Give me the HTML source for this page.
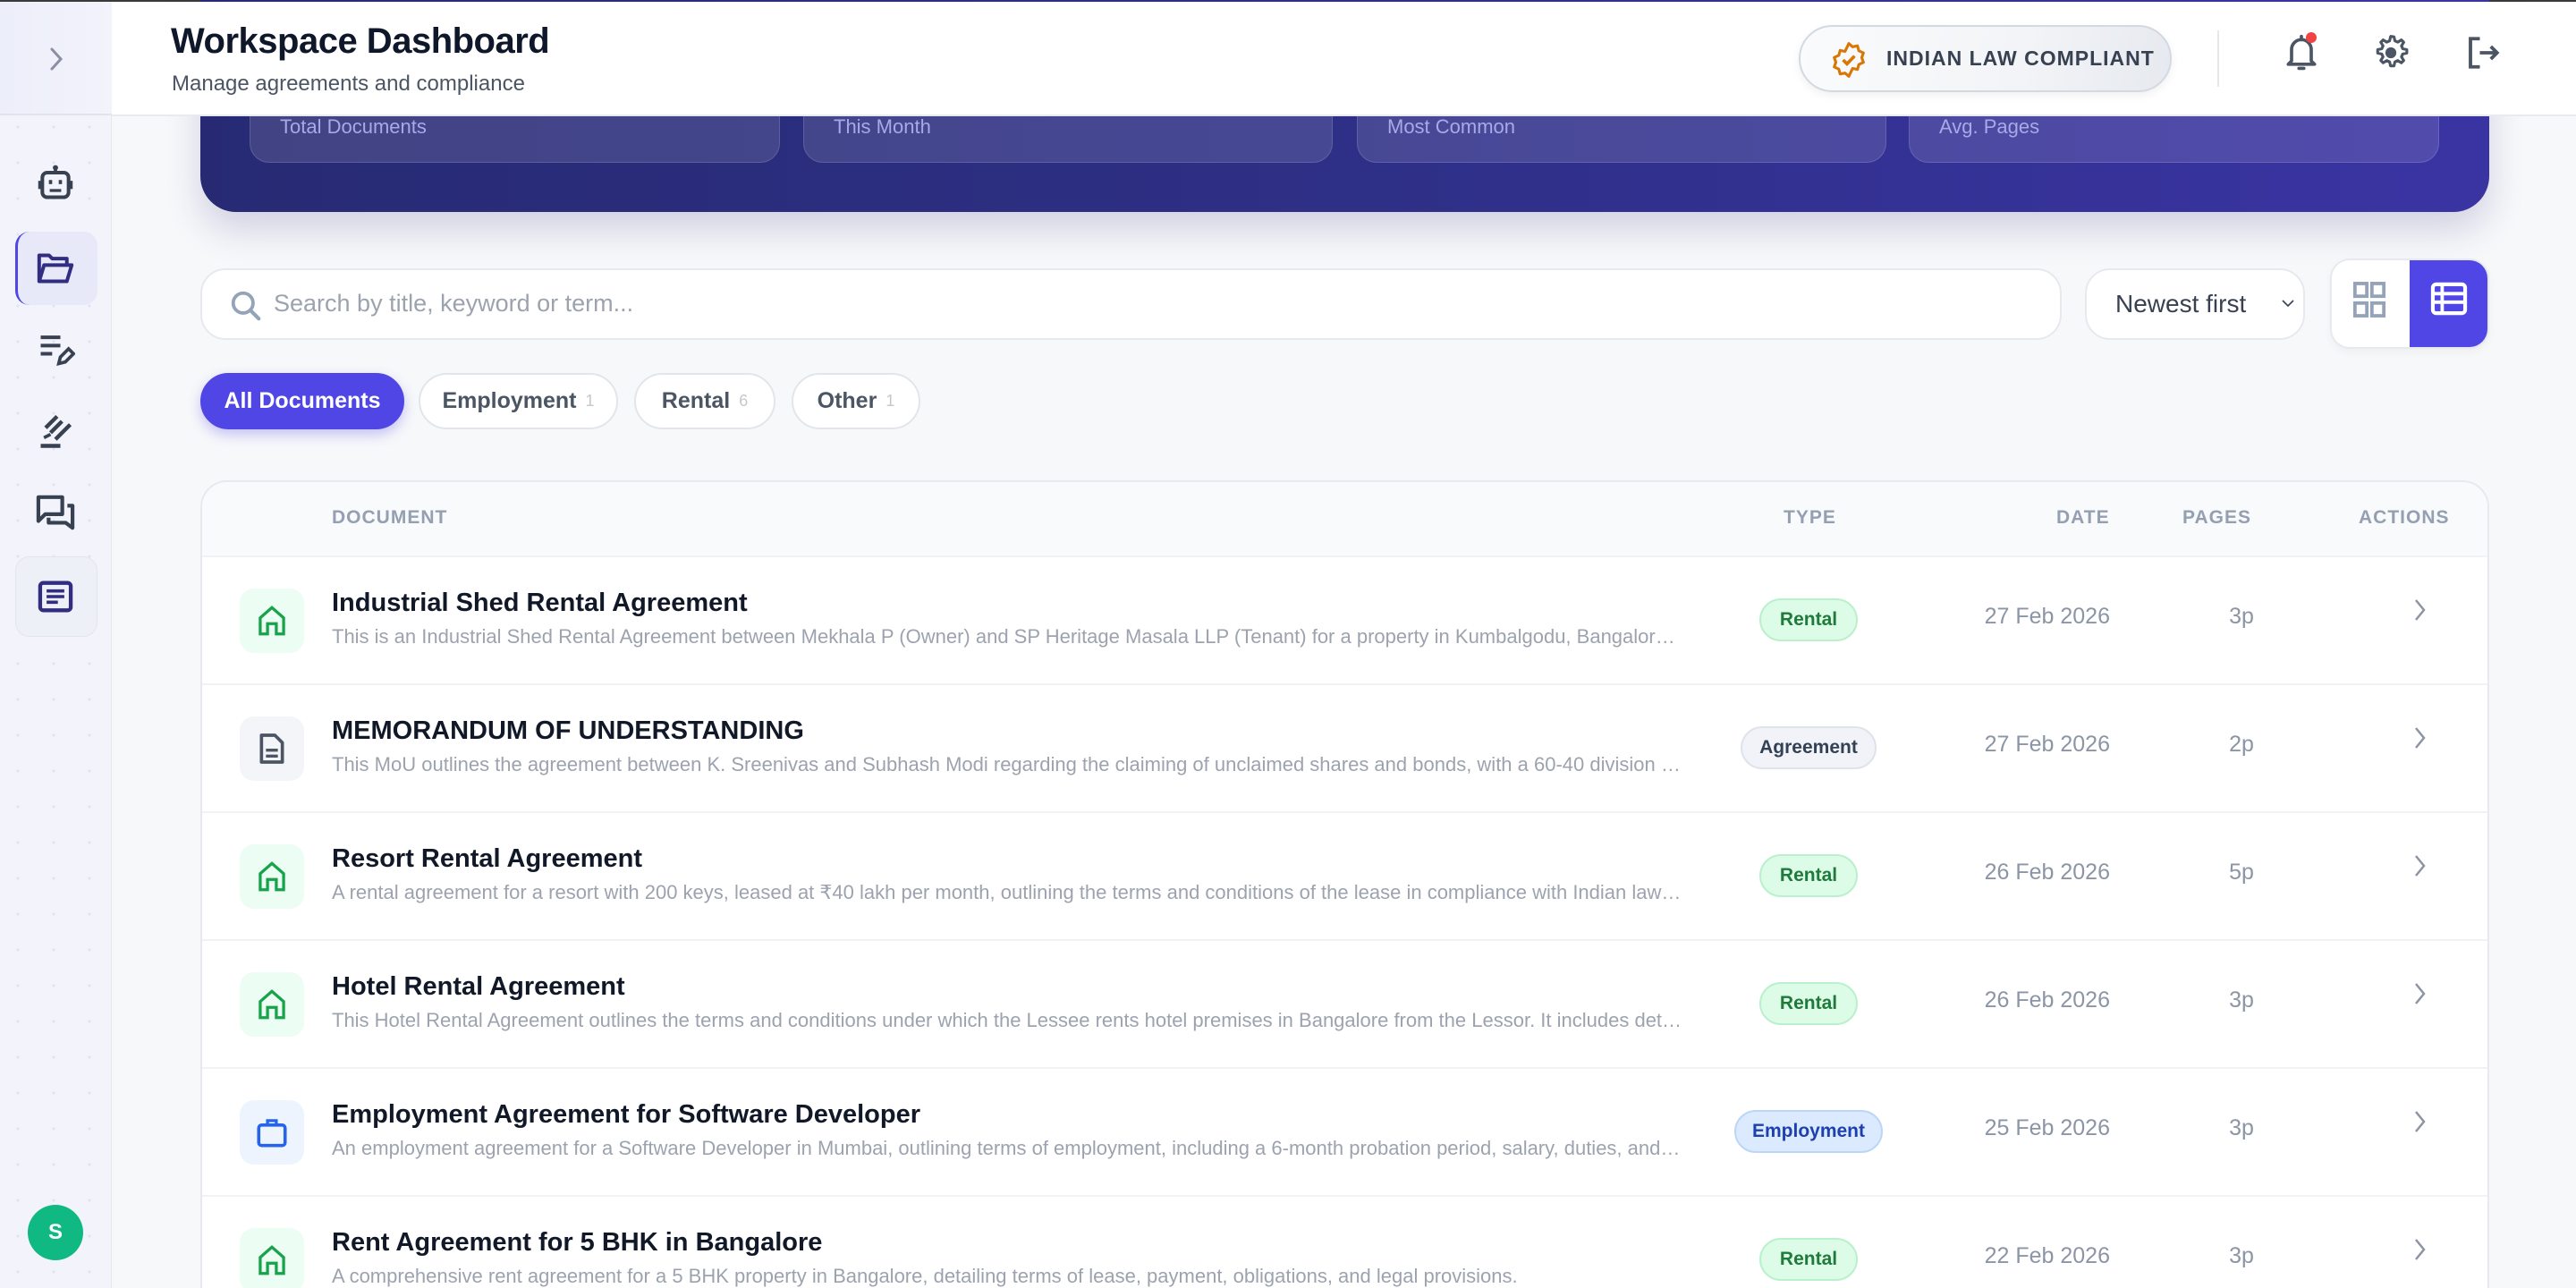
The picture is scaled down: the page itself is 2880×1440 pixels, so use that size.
<!DOCTYPE html>
<html style="width:2880px;height:1440px;overflow:hidden"><head><meta charset="utf-8">
<style>
*{box-sizing:border-box;margin:0;padding:0}
html,body{width:2880px;height:1440px;overflow:hidden}
body{background:#f7f8fa;font-family:"Liberation Sans",sans-serif;position:relative;border-top:2px solid #3a3a3a}
.abs{position:absolute}
#side{left:0;top:0;width:125px;height:1440px;background-color:#f3f4fb;background-image:radial-gradient(#e2e4ef 1.5px,transparent 1.6px);background-size:40px 40px;border-right:1px solid #e5e7eb}
#sidetop{left:0;top:0;width:125px;height:127px;border-bottom:2px solid #e2e4ea;background:linear-gradient(90deg,#eceefa,#f2f3fb)}
.sic{position:absolute;left:62px;transform:translate(-50%,-50%)}
#hdr{left:125px;top:0;width:2755px;height:128px;background:#fff;border-bottom:2px solid #e8eaee;z-index:5}
h1{position:absolute;left:66px;top:22px;font-size:40px;font-weight:700;color:#0f172a;letter-spacing:-0.5px}
.sub{position:absolute;left:67px;top:78px;font-size:24px;color:#4b5563}
#hero{left:224px;top:-100px;width:2559px;height:335px;border-radius:40px;background:linear-gradient(90deg,#272a73,#2e2f86 50%,#3a34a3);box-shadow:0 20px 40px rgba(40,40,120,.18)}
.stat{position:absolute;top:140px;height:140px;border-radius:22px;background:rgba(255,255,255,.12);border:1.5px solid rgba(255,255,255,.14)}
.stat span{position:absolute;left:33px;top:86px;font-size:22px;color:#a7aae6}
.box{background:#fff;border:2px solid #e7e9ee;border-radius:28px}
.chip{position:absolute;top:415px;height:63px;border-radius:32px;background:#fff;border:2px solid #e2e5ea;font-size:25px;font-weight:700;color:#4b5563;display:flex;align-items:center;justify-content:center}
.chip small{font-size:18px;color:#c3c8d0;margin-left:10px;font-weight:400}
#tbl{left:224px;top:535px;width:2559px;height:960px;background:#fff;border:2px solid #e6e9ee;border-radius:30px;overflow:hidden}
.th{position:absolute;top:28px;font-size:21px;font-weight:700;color:#94a0b2;letter-spacing:1px}
.row{position:absolute;left:0;width:2559px;height:143px;border-top:2px solid #f0f2f5}
.ib{position:absolute;left:42px;top:35px;width:72px;height:72px;border-radius:16px;display:flex;align-items:center;justify-content:center}
.tt{position:absolute;left:145px;top:35px;font-size:29px;font-weight:700;color:#111827}
.ds{position:absolute;left:145px;top:76px;width:1510px;font-size:22px;color:#9ca3af;white-space:nowrap;overflow:hidden;text-overflow:ellipsis}
.pill{position:absolute;top:46px;height:48px;border-radius:24px;font-size:21px;font-weight:700;display:flex;align-items:center;justify-content:center;transform:translateX(-50%)}
.rent{background:#dcfce7;border:2px solid #bbf0cc;color:#1f7a3b;width:110px}
.agr{background:#f1f3f8;border:2px solid #dfe3ea;color:#334155;width:152px}
.emp{background:#dbeafe;border:2px solid #bcd6f5;color:#1e40af;width:166px}
.dt{position:absolute;width:300px;text-align:right;top:52px;font-size:25px;color:#8b95a5;left:1833px}
.pg{position:absolute;left:2240px;width:80px;text-align:center;top:52px;font-size:25px;color:#8b95a5}
.chev{position:absolute;left:2470px;top:44px}
</style></head><body>

<div id="side" class="abs"></div>
<div id="sidetop" class="abs"></div>
<svg class="sic" style="top:64px" width="24" height="34" viewBox="0 0 24 34"><path d="M8 6l10 11-10 11" fill="none" stroke="#8a8fa3" stroke-width="3" stroke-linecap="round"/></svg>
<svg class="sic" style="top:202px" width="44" height="44" viewBox="0 0 24 24"><circle cx="12" cy="3" r="1.6" fill="#374151"/><rect x="11" y="3" width="2" height="3" fill="#374151"/><rect x="4" y="6" width="16" height="15" rx="3" fill="none" stroke="#374151" stroke-width="2.2"/><rect x="1.5" y="11" width="2.5" height="5" fill="#374151"/><rect x="20" y="11" width="2.5" height="5" fill="#374151"/><rect x="8" y="10.5" width="2" height="2.5" fill="#374151"/><rect x="14" y="10.5" width="2" height="2.5" fill="#374151"/><rect x="8.5" y="16" width="7" height="1.8" fill="#374151"/></svg>
<div class="abs" style="left:17px;top:257px;width:92px;height:82px;border-radius:16px;background:#e7e8f8;border-left:3px solid #4f46e5"></div>
<svg class="sic" style="top:298px" width="44" height="40" viewBox="0 0 24 22"><path d="M2 19V3h6l2 2h9v4" fill="none" stroke="#312e81" stroke-width="2.2" stroke-linejoin="round"/><path d="M2 19l3-10h17l-3 10z" fill="none" stroke="#312e81" stroke-width="2.2" stroke-linejoin="round"/></svg>
<svg class="sic" style="top:388px" width="44" height="44" viewBox="0 0 24 24"><path d="M3 5h12M3 10h12M3 15h7" stroke="#374151" stroke-width="2.2"/><path d="M14 21l1-4 5-5 3 3-5 5z" fill="none" stroke="#374151" stroke-width="2"/></svg>
<svg class="sic" style="top:480px" width="44" height="44" viewBox="0 0 24 24"><path d="M3 21h12" stroke="#374151" stroke-width="2.4"/><path d="M6 10l7-7M9 13l7-7M12 17l9-9" stroke="#374151" stroke-width="2.4"/><path d="M5 16l4-2" stroke="#374151" stroke-width="2"/></svg>
<svg class="sic" style="top:571px" width="46" height="42" viewBox="0 0 24 22"><path d="M2 2h14v10H6l-4 4z" fill="none" stroke="#374151" stroke-width="2.2" stroke-linejoin="round"/><path d="M19 7h3v13l-4-3H8v-3" fill="none" stroke="#374151" stroke-width="2.2" stroke-linejoin="round"/></svg>
<div class="abs" style="left:17px;top:620px;width:92px;height:90px;border-radius:16px;background:#eef0f8;border:1.5px solid #e2e5ee"></div>
<svg class="sic" style="top:665px" width="40" height="36" viewBox="0 0 22 20"><rect x="1.5" y="1.5" width="19" height="17" rx="2" fill="none" stroke="#312e81" stroke-width="2.4"/><path d="M5.5 6.5h11M5.5 10h11M5.5 13.5h7" stroke="#312e81" stroke-width="2"/></svg>
<div class="abs" style="left:31px;top:1345px;width:62px;height:62px;border-radius:50%;background:#10b981;color:#fff;font-weight:700;font-size:24px;display:flex;align-items:center;justify-content:center">S</div>

<div id="hero" class="abs">
 <div class="stat" style="left:55px;width:593px"><span>Total Documents</span></div>
 <div class="stat" style="left:674px;width:592px"><span>This Month</span></div>
 <div class="stat" style="left:1293px;width:592px"><span>Most Common</span></div>
 <div class="stat" style="left:1910px;width:593px"><span>Avg. Pages</span></div>
</div>

<div id="hdr" class="abs">
 <h1>Workspace Dashboard</h1>
 <div class="sub">Manage agreements and compliance</div>
 <div class="abs" style="left:1886px;top:26px;width:417px;height:75px;border-radius:38px;border:2px solid #d4d8e0;background:linear-gradient(100deg,#fafbfc,#f2f4f7 60%,#e6e9ef);box-shadow:0 4px 10px rgba(0,0,0,.06)"></div>
 <svg class="abs" style="left:1920px;top:42px" width="44" height="46" viewBox="0 0 24 24"><path d="M12 2l2.3 2 3-.6.8 3 2.8 1.3-1 2.9 1 2.9-2.8 1.3-.8 3-3-.6L12 22l-2.3-2-3 .6-.8-3L3.1 16.3l1-2.9-1-2.9 2.8-1.3.8-3 3 .6z" fill="none" stroke="#d97706" stroke-width="1.7" stroke-linejoin="round"/><path d="M8.5 12l2.4 2.4 4.6-4.8" fill="none" stroke="#d97706" stroke-width="2"/></svg>
 <div class="abs" style="left:1984px;top:50px;font-size:23px;font-weight:700;color:#374151;letter-spacing:1px">INDIAN LAW COMPLIANT</div>
 <div class="abs" style="left:2354px;top:32px;width:2px;height:63px;background:#e5e7eb"></div>
 <svg class="abs" style="left:2426px;top:34px" width="44" height="46" viewBox="0 0 24 24"><path d="M6 17V10a6 6 0 0 1 12 0v7l2 2H4z" fill="none" stroke="#4b5563" stroke-width="2" stroke-linejoin="round"/><path d="M12 2v2M10.5 21.5h3" stroke="#4b5563" stroke-width="2" stroke-linecap="round"/></svg>
 <div class="abs" style="left:2453px;top:34px;width:12px;height:12px;border-radius:50%;background:#ef4444"></div>
 <svg class="abs" style="left:2527px;top:36px" width="42" height="42" viewBox="0 0 24 24"><path d="M12 1.5l2 .3.6 2.6 1.8.8 2.3-1.4 1.5 1.5-1.4 2.3.8 1.8 2.6.6v2.2l-2.6.6-.8 1.8 1.4 2.3-1.5 1.5-2.3-1.4-1.8.8-.6 2.6h-2.2l-.6-2.6-1.8-.8-2.3 1.4-1.5-1.5 1.4-2.3-.8-1.8-2.6-.6v-2.2l2.6-.6.8-1.8-1.4-2.3 1.5-1.5 2.3 1.4 1.8-.8.6-2.6z" fill="none" stroke="#4b5563" stroke-width="1.8" stroke-linejoin="round"/><circle cx="12" cy="12" r="3.5" fill="#4b5563"/></svg>
 <svg class="abs" style="left:2630px;top:36px" width="42" height="42" viewBox="0 0 24 24"><path d="M10 3H4v18h6" fill="none" stroke="#4b5563" stroke-width="2.2"/><path d="M10 12h11M17 8l4 4-4 4" fill="none" stroke="#4b5563" stroke-width="2.2"/></svg>
</div>

<div class="abs box" style="left:224px;top:298px;width:2081px;height:80px"></div>
<svg class="abs" style="left:256px;top:320px" width="38" height="40" viewBox="0 0 24 24"><circle cx="10" cy="10" r="7" fill="none" stroke="#94a3b8" stroke-width="2.4"/><path d="M15 15l6 6" stroke="#94a3b8" stroke-width="2.6" stroke-linecap="round"/></svg>
<div class="abs" style="left:306px;top:322px;font-size:27px;color:#9ca3af">Search by title, keyword or term...</div>
<div class="abs box" style="left:2331px;top:298px;width:246px;height:80px"></div>
<div class="abs" style="left:2365px;top:322px;font-size:28px;color:#374151">Newest first</div>
<svg class="abs" style="left:2550px;top:330px" width="16" height="14" viewBox="0 0 16 14"><path d="M2 4l6 6 6-6" fill="none" stroke="#374151" stroke-width="1.6"/></svg>
<div class="abs" style="left:2605px;top:287px;width:178px;height:101px;border-radius:22px;background:#fff;border:2px solid #e7e9ee;overflow:hidden;box-shadow:0 4px 10px rgba(0,0,0,.04)"><div style="position:absolute;left:87px;top:0;width:91px;height:101px;background:#4f46e5"></div></div>
<svg class="abs" style="left:2630px;top:312px" width="38" height="42" viewBox="0 0 20 22"><rect x="1.5" y="1.5" width="7" height="7.5" fill="none" stroke="#94a3b8" stroke-width="2"/><rect x="11.5" y="1.5" width="7" height="7.5" fill="none" stroke="#94a3b8" stroke-width="2"/><rect x="1.5" y="13" width="7" height="7.5" fill="none" stroke="#94a3b8" stroke-width="2"/><rect x="11.5" y="13" width="7" height="7.5" fill="none" stroke="#94a3b8" stroke-width="2"/></svg>
<svg class="abs" style="left:2717px;top:313px" width="42" height="38" viewBox="0 0 22 20"><rect x="1.5" y="1.5" width="19" height="17" rx="2" fill="none" stroke="#fff" stroke-width="2.2"/><path d="M2 7h18M2 12h18M7 2v16" stroke="#fff" stroke-width="2"/></svg>

<div class="chip" style="left:224px;width:228px;background:#4f46e5;border-color:#4f46e5;color:#fff;box-shadow:0 6px 14px rgba(79,70,229,.3)">All Documents</div>
<div class="chip" style="left:468px;width:223px">Employment<small>1</small></div>
<div class="chip" style="left:709px;width:158px">Rental<small>6</small></div>
<div class="chip" style="left:885px;width:144px">Other<small>1</small></div>

<div id="tbl" class="abs">
 <div style="position:absolute;left:0;top:0;width:2559px;height:84px;background:#f8fafc"></div>
 <div class="th" style="left:145px">DOCUMENT</div>
 <div class="th" style="left:1768px">TYPE</div>
 <div class="th" style="left:2073px">DATE</div>
 <div class="th" style="left:2214px">PAGES</div>
 <div class="th" style="left:2411px">ACTIONS</div>

 <div class="row" style="top:82px">
  <div class="ib" style="background:#ecfdf3"><svg width="34" height="36" viewBox="0 0 20 22"><path d="M2 20V9l8-7 8 7v11h-5v-7H7v7z" fill="none" stroke="#16a34a" stroke-width="2"/></svg></div>
  <div class="tt">Industrial Shed Rental Agreement</div>
  <div class="ds">This is an Industrial Shed Rental Agreement between Mekhala P (Owner) and SP Heritage Masala LLP (Tenant) for a property in Kumbalgodu, Bangalore, outlining the terms</div>
  <div class="pill rent" style="left:1796px">Rental</div>
  <div class="dt">27 Feb 2026</div><div class="pg">3p</div>
  <svg class="chev" width="20" height="30" viewBox="0 0 20 30"><path d="M5 4l9 11-9 11" fill="none" stroke="#8b95a5" stroke-width="2.5"/></svg>
 </div>
 <div class="row" style="top:225px">
  <div class="ib" style="background:#f3f5f8"><svg width="30" height="38" viewBox="0 0 18 22"><path d="M2 2h9l5 5v13H2z" fill="none" stroke="#4b5563" stroke-width="2.2" stroke-linejoin="round"/><path d="M5 12h8M5 16h8" stroke="#4b5563" stroke-width="2"/></svg></div>
  <div class="tt">MEMORANDUM OF UNDERSTANDING</div>
  <div class="ds">This MoU outlines the agreement between K. Sreenivas and Subhash Modi regarding the claiming of unclaimed shares and bonds, with a 60-40 division of proceeds</div>
  <div class="pill agr" style="left:1796px">Agreement</div>
  <div class="dt">27 Feb 2026</div><div class="pg">2p</div>
  <svg class="chev" width="20" height="30" viewBox="0 0 20 30"><path d="M5 4l9 11-9 11" fill="none" stroke="#8b95a5" stroke-width="2.5"/></svg>
 </div>
 <div class="row" style="top:368px">
  <div class="ib" style="background:#ecfdf3"><svg width="34" height="36" viewBox="0 0 20 22"><path d="M2 20V9l8-7 8 7v11h-5v-7H7v7z" fill="none" stroke="#16a34a" stroke-width="2"/></svg></div>
  <div class="tt">Resort Rental Agreement</div>
  <div class="ds">A rental agreement for a resort with 200 keys, leased at ₹40 lakh per month, outlining the terms and conditions of the lease in compliance with Indian law and regulations</div>
  <div class="pill rent" style="left:1796px">Rental</div>
  <div class="dt">26 Feb 2026</div><div class="pg">5p</div>
  <svg class="chev" width="20" height="30" viewBox="0 0 20 30"><path d="M5 4l9 11-9 11" fill="none" stroke="#8b95a5" stroke-width="2.5"/></svg>
 </div>
 <div class="row" style="top:511px">
  <div class="ib" style="background:#ecfdf3"><svg width="34" height="36" viewBox="0 0 20 22"><path d="M2 20V9l8-7 8 7v11h-5v-7H7v7z" fill="none" stroke="#16a34a" stroke-width="2"/></svg></div>
  <div class="tt">Hotel Rental Agreement</div>
  <div class="ds">This Hotel Rental Agreement outlines the terms and conditions under which the Lessee rents hotel premises in Bangalore from the Lessor. It includes details on rent</div>
  <div class="pill rent" style="left:1796px">Rental</div>
  <div class="dt">26 Feb 2026</div><div class="pg">3p</div>
  <svg class="chev" width="20" height="30" viewBox="0 0 20 30"><path d="M5 4l9 11-9 11" fill="none" stroke="#8b95a5" stroke-width="2.5"/></svg>
 </div>
 <div class="row" style="top:654px">
  <div class="ib" style="background:#eef4fd"><svg width="36" height="36" viewBox="0 0 22 22"><rect x="2" y="6" width="18" height="14" rx="2" fill="none" stroke="#2563eb" stroke-width="2.2"/><path d="M8 6V3h6v3" fill="none" stroke="#2563eb" stroke-width="2"/></svg></div>
  <div class="tt">Employment Agreement for Software Developer</div>
  <div class="ds">An employment agreement for a Software Developer in Mumbai, outlining terms of employment, including a 6-month probation period, salary, duties, and benefits</div>
  <div class="pill emp" style="left:1796px">Employment</div>
  <div class="dt">25 Feb 2026</div><div class="pg">3p</div>
  <svg class="chev" width="20" height="30" viewBox="0 0 20 30"><path d="M5 4l9 11-9 11" fill="none" stroke="#8b95a5" stroke-width="2.5"/></svg>
 </div>
 <div class="row" style="top:797px">
  <div class="ib" style="background:#ecfdf3"><svg width="34" height="36" viewBox="0 0 20 22"><path d="M2 20V9l8-7 8 7v11h-5v-7H7v7z" fill="none" stroke="#16a34a" stroke-width="2"/></svg></div>
  <div class="tt">Rent Agreement for 5 BHK in Bangalore</div>
  <div class="ds">A comprehensive rent agreement for a 5 BHK property in Bangalore, detailing terms of lease, payment, obligations, and legal provisions.</div>
  <div class="pill rent" style="left:1796px">Rental</div>
  <div class="dt">22 Feb 2026</div><div class="pg">3p</div>
  <svg class="chev" width="20" height="30" viewBox="0 0 20 30"><path d="M5 4l9 11-9 11" fill="none" stroke="#8b95a5" stroke-width="2.5"/></svg>
 </div>
</div>
</body></html>
